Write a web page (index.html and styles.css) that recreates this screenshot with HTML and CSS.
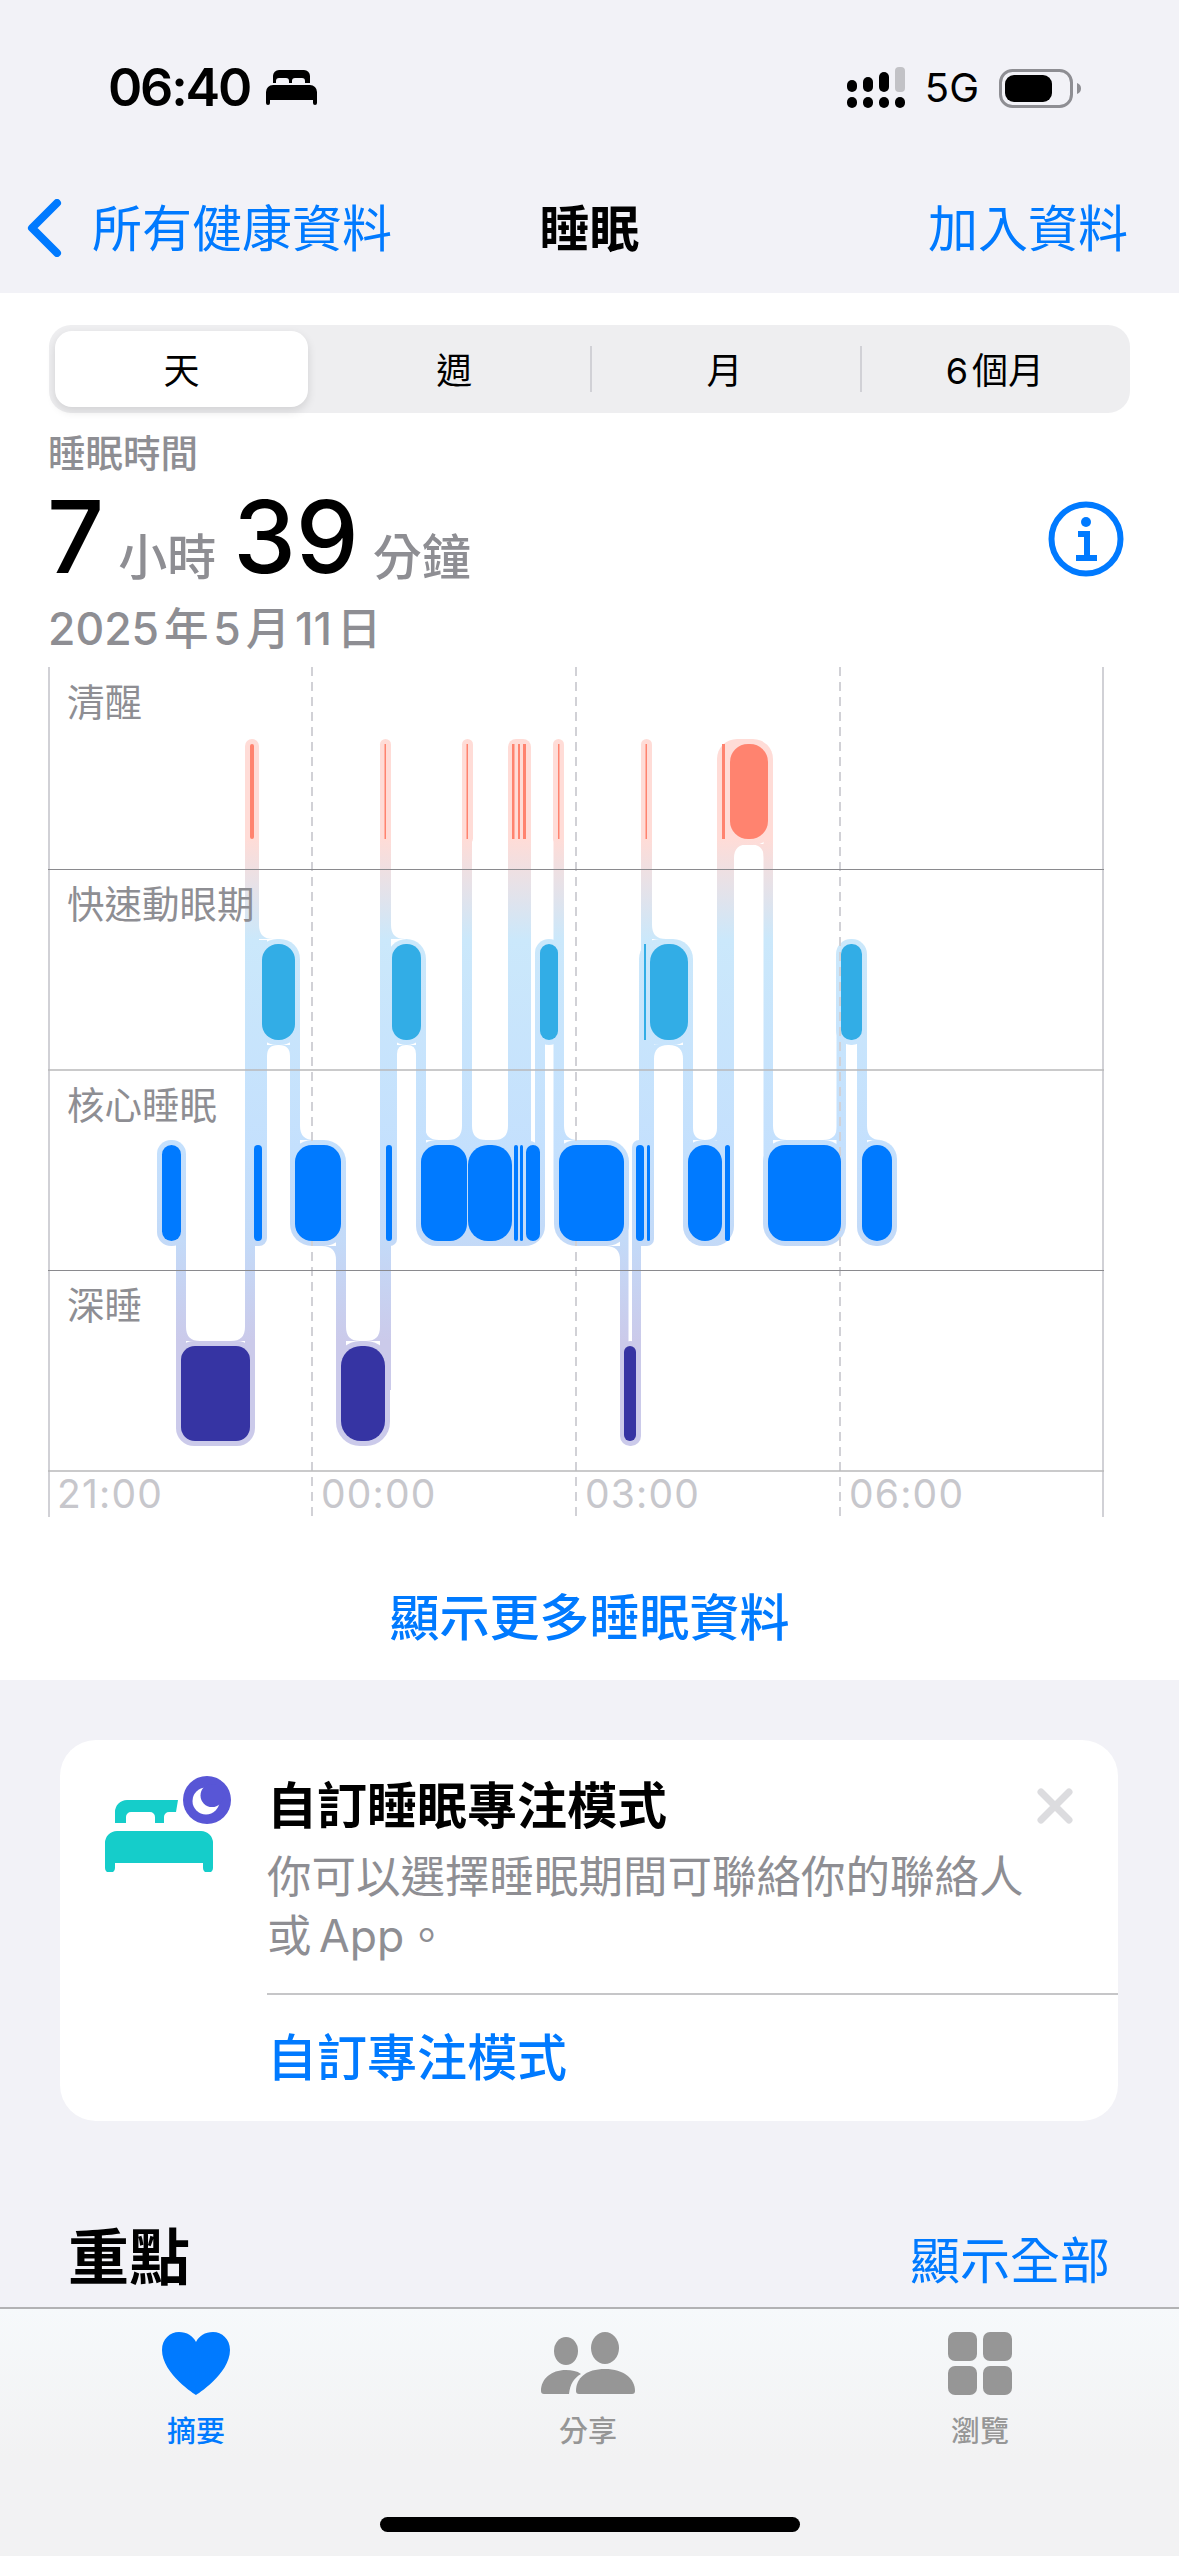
FILE: index.html
```html
<!DOCTYPE html>
<html lang="zh-Hant">
<head>
  <meta charset="utf-8">
  <title>睡眠</title>
  <link rel="stylesheet" href="styles.css">
</head>
<body>
<div class="screen">

  <header class="top">
    <div class="status">
      <div class="status-left">
        <span class="clock">06:40</span>
        <svg class="status-bed" viewBox="0 0 51 35">
          <path d="M7 13V6a6 6 0 0 1 6-6h25a6 6 0 0 1 6 6v7h-5v-2a3 3 0 0 0-3-3h-7a3 3 0 0 0-3 3v2h-3v-2a3 3 0 0 0-3-3h-7a3 3 0 0 0-3 3v2z"/>
          <path d="M0 22a7 7 0 0 1 7-7h37a7 7 0 0 1 7 7v11a2 2 0 0 1-4 0v-3H4v3a2 2 0 0 1-4 0z"/>
        </svg>
      </div>
      <div class="status-right">
        <svg class="signal" viewBox="0 0 58 41">
          <rect x="0" y="13" width="10" height="12" rx="5"/>
          <rect x="16" y="10" width="10" height="15" rx="5"/>
          <rect x="32" y="5" width="10" height="20" rx="5"/>
          <rect class="signal-off" x="48" y="0" width="10" height="25" rx="4"/>
          <rect x="0" y="30" width="10" height="11" rx="5"/>
          <rect x="16" y="30" width="10" height="11" rx="5"/>
          <rect x="32" y="30" width="10" height="11" rx="5"/>
          <rect x="48" y="30" width="10" height="11" rx="5"/>
        </svg>
        <span class="net">5G</span>
        <svg class="battery" viewBox="0 0 82 39">
          <rect class="battery-case" x="1.5" y="1.5" width="71" height="36" rx="12"/>
          <rect x="6" y="6" width="47" height="27" rx="9"/>
          <path class="battery-cap" d="M78 14c3 1 4 3 4 5.500s-1 4.500-4 5.500z"/>
        </svg>
      </div>
    </div>
    <nav class="navbar">
      <a class="nav-back">
        <svg class="chevron" viewBox="0 0 36 58"><path d="M30 4 5 29l25 25"/></svg>
        <span>所有健康資料</span>
      </a>
      <strong class="nav-title">睡眠</strong>
      <a class="nav-add">加入資料</a>
    </nav>
  </header>

  <section class="sleep">
    <div class="segments">
      <div class="seg seg-on">天</div>
      <div class="seg">週</div>
      <div class="seg seg-line">月</div>
      <div class="seg seg-line">6 個月</div>
    </div>

    <div class="summary">
      <div class="sum-label">睡眠時間</div>
      <div class="sum-row">
        <div class="sum-value">
          <span class="num">7</span><span class="unit">小時</span><span class="num num-min">39</span><span class="unit">分鐘</span>
        </div>
        <svg class="info" viewBox="0 0 76 76">
          <circle cx="38" cy="38" r="34.500"/>
          <circle class="info-dot" cx="38" cy="21" r="5"/>
          <path d="M30 33h9v24M28 57h21"/>
        </svg>
      </div>
      <div class="sum-date">2025 年 5 月 11 日</div>
    </div>

    <div class="chart">
      <svg class="plot" viewBox="48 667 1056 850">
        <defs>
          <linearGradient id="halo" gradientUnits="userSpaceOnUse" x1="0" y1="739" x2="0" y2="1446">
            <stop offset="0.141" stop-color="#ffdcd7"/>
            <stop offset="0.284" stop-color="#cbe8fb"/>
            <stop offset="0.581" stop-color="#c4e0fd"/>
            <stop offset="0.709" stop-color="#c3daf8"/>
            <stop offset="0.851" stop-color="#cbcaea"/>
          </linearGradient>
        </defs>

        <g fill="url(#halo)">
          <!-- awake halos -->
          <rect x="245" y="739" width="14" height="105" rx="7"/>
          <rect x="380" y="739" width="11" height="105" rx="5.500"/>
          <rect x="462" y="739" width="11" height="105" rx="5.500"/>
          <rect x="508" y="739" width="23" height="105" rx="8"/>
          <rect x="553" y="739" width="11" height="105" rx="5.500"/>
          <rect x="641" y="739" width="11" height="105" rx="5.500"/>
          <rect x="717" y="739" width="56" height="106" rx="20"/>
          <!-- rem halos -->
          <rect x="257" y="939" width="43" height="106" rx="20"/>
          <rect x="387" y="939" width="39" height="106" rx="20"/>
          <rect x="535" y="939" width="28" height="106" rx="14"/>
          <rect x="639" y="939" width="54" height="106" rx="20"/>
          <rect x="836" y="939" width="31" height="106" rx="15"/>
          <!-- core halos -->
          <rect x="157" y="1140" width="29" height="106" rx="14"/>
          <rect x="245" y="1140" width="22" height="106" rx="8"/>
          <rect x="290" y="1140" width="56" height="106" rx="22"/>
          <rect x="380" y="1140" width="17" height="106" rx="7"/>
          <rect x="416" y="1140" width="129" height="106" rx="20"/>
          <rect x="554" y="1140" width="75" height="106" rx="22"/>
          <rect x="632" y="1140" width="22" height="106" rx="7"/>
          <rect x="683" y="1140" width="51" height="106" rx="20"/>
          <rect x="763" y="1140" width="83" height="106" rx="22"/>
          <rect x="857" y="1140" width="40" height="106" rx="19"/>
          <!-- deep halos -->
          <rect x="176" y="1341" width="79" height="105" rx="18"/>
          <rect x="336" y="1341" width="54" height="105" rx="24"/>
          <rect x="620" y="1341" width="21" height="105" rx="10"/>
          <!-- links between stages -->
          <path d="M245 790h14v150h-14zM245 940h22v260h-22zM290 1000h10v190h-10zM176 1200h10v190h-10zM245 1200h10v190h-10zM336 1200h10v190h-10zM380 790h11v600h-11zM380 1000h17v190h-17zM416 1000h10v190h-10zM462 790h10v400h-10zM508 790h23v400h-23zM535 1000h10v190h-10zM553.500 790h10.500v400h-10.500zM620 1200h8.500v190h-8.500zM632 1200h9v190h-9zM641 790h11v200h-11zM639 1000h15v190h-15zM683 1000h10v190h-10zM717 790h17v400h-17zM763.500 790h9.500v400h-9.500zM836.500 1000h9.500v190h-9.500zM857 1000h10v190h-10z"/>
          <!-- rounded inner corners -->
          <path d="M734 844h15q-15 0-15 14zM764 844h-15q15 0 15 14zM259 939h14q-14 0-14-14zM391 939h14q-14 0-14-14zM652 939h14q-14 0-14-14zM267 1045h11q-11 0-11 11zM290 1045h-11q11 0 11 11zM397 1045h9q-9 0-9 9zM416 1045h-9q9 0 9 9zM654 1045h14q-14 0-14 14zM683 1045h-14q14 0 14 14zM425 1140h14q-14 0-14-14zM462 1140h-14q14 0 14-14zM472 1140h14q-14 0-14-14zM508 1140h-14q14 0 14-14zM564 1140h14q-14 0-14-14zM300 1140h14q-14 0-14-14zM693 1140h12q-12 0-12-12zM717 1140h-12q12 0 12-12zM773 1140h14q-14 0-14-14zM837 1140h-14q14 0 14-14zM867 1140h14q-14 0-14-14zM186 1341h14q-14 0-14-14zM245 1341h-14q14 0 14-14zM346 1341h14q-14 0-14-14zM380 1341h-14q14 0 14-14zM336 1246h-14q14 0 14 14zM620 1246h-14q14 0 14 14z"/>
        </g>

        <!-- grid -->
        <g class="grid-axis">
          <path d="M49 667v850M1103 667v850"/>
        </g>
        <g class="grid-dash">
          <path d="M312 667v850M576 667v850M840 667v850"/>
        </g>
        <path class="grid-dark" d="M48 869.500h1056M48 1270.500h1056"/>
        <path class="grid-soft" d="M48 1070h1056M48 1471h1056"/>

        <g class="bar-awake">
          <rect x="250" y="744" width="4" height="95" rx="2"/>
          <rect x="384.500" y="744" width="1.500" height="95"/>
          <rect x="466.500" y="744" width="1.500" height="95"/>
          <rect x="512" y="744" width="2.500" height="95"/>
          <rect x="518" y="744" width="2" height="95"/>
          <rect x="523" y="744" width="3" height="95"/>
          <rect x="558" y="744" width="1.500" height="95"/>
          <rect x="645.500" y="744" width="1.500" height="95"/>
          <rect x="722" y="744" width="3" height="95"/>
          <rect x="730" y="744" width="38" height="95" rx="18"/>
        </g>
        <g class="bar-rem">
          <rect x="262" y="944" width="33" height="96" rx="16"/>
          <rect x="392" y="944" width="29" height="96" rx="14"/>
          <rect x="540" y="944" width="18" height="96" rx="9"/>
          <rect x="644" y="944" width="2" height="96"/>
          <rect x="650" y="944" width="38" height="96" rx="18"/>
          <rect x="841" y="944" width="21" height="96" rx="10"/>
        </g>
        <g class="bar-core">
          <rect x="162" y="1145" width="19" height="96" rx="9.500"/>
          <rect x="254" y="1145" width="8" height="96" rx="4"/>
          <rect x="295" y="1145" width="46" height="96" rx="17"/>
          <rect x="386" y="1145" width="6" height="96" rx="3"/>
          <rect x="421" y="1145" width="46" height="96" rx="17"/>
          <rect x="468" y="1145" width="44" height="96" rx="20"/>
          <rect x="514" y="1145" width="4" height="96" rx="2"/>
          <rect x="520" y="1145" width="3" height="96" rx="1.500"/>
          <rect x="526" y="1145" width="14" height="96" rx="7"/>
          <rect x="559" y="1145" width="65" height="96" rx="17"/>
          <rect x="636" y="1145" width="8" height="96" rx="4"/>
          <rect x="647" y="1145" width="3" height="96" rx="1.500"/>
          <rect x="688" y="1145" width="34" height="96" rx="17"/>
          <rect x="725" y="1145" width="5" height="96" rx="2.500"/>
          <rect x="768" y="1145" width="73" height="96" rx="17"/>
          <rect x="862" y="1145" width="30" height="96" rx="15"/>
        </g>
        <g class="bar-deep">
          <rect x="181" y="1346" width="69" height="95" rx="14"/>
          <rect x="341" y="1346" width="44" height="95" rx="20"/>
          <rect x="624" y="1346" width="12" height="95" rx="6"/>
        </g>
      </svg>

      <div class="stage">清醒</div>
      <div class="stage">快速動眼期</div>
      <div class="stage">核心睡眠</div>
      <div class="stage">深睡</div>
      <div class="hours">
        <span>21:00</span>
        <span>00:00</span>
        <span>03:00</span>
        <span>06:00</span>
      </div>
    </div>

    <a class="more">顯示更多睡眠資料</a>
  </section>

  <section class="card">
    <svg class="card-icon" viewBox="0 0 126 96">
      <path class="bed" d="M0 67a12 12 0 0 1 12-12h84a12 12 0 0 1 12 12v25a5 5 0 0 1-10 0v-5H10v5a5 5 0 0 1-10 0z"/>
      <path class="bed" d="M10 47V36a12 12 0 0 1 12-12h51l-2 12h-7a5 5 0 0 0-5 5v6h-9v-6a5 5 0 0 0-5-5H26a5 5 0 0 0-5 5v6z"/>
      <circle class="moon" cx="102" cy="24" r="24"/>
      <circle class="moon-light" cx="101" cy="25" r="13.500"/>
      <circle class="moon" cx="107" cy="19.500" r="11.500"/>
    </svg>
    <div class="card-body">
      <div class="card-head">
        <h2>自訂睡眠專注模式</h2>
        <svg class="close" viewBox="0 0 36 36"><path d="M4 4l28 28M32 4 4 32"/></svg>
      </div>
      <p>你可以選擇睡眠期間可聯絡你的聯絡人<br>或 App。</p>
      <a class="card-link">自訂專注模式</a>
    </div>
  </section>

  <div class="highlights">
    <h2>重點</h2>
    <a>顯示全部</a>
  </div>

  <footer class="tabbar">
    <div class="tab tab-on">
      <svg class="tab-heart" viewBox="0 0 68 63"><path d="M34 63S0 42 0 18C0 7 8 0 17 0c8 0 14 4 17 10C37 4 43 0 51 0c9 0 17 7 17 18 0 24-34 45-34 45z"/></svg>
      <span>摘要</span>
    </div>
    <div class="tab">
      <svg class="tab-share" viewBox="0 0 94 63">
        <ellipse cx="25" cy="19" rx="12" ry="14"/>
        <ellipse cx="64" cy="16" rx="14" ry="16"/>
        <path d="M3 62a3 3 0 0 1-3-3C0 47 10 38 25 38c6 0 11 1 15 4C33 46 29 52 28 62z"/>
        <path d="M38 62a3 3 0 0 1-3-3C35 46 45 37 64 37s30 10 30 22a3 3 0 0 1-3 3z"/>
      </svg>
      <span>分享</span>
    </div>
    <div class="tab">
      <svg class="tab-grid" viewBox="0 0 64 63">
        <rect x="0" y="0" width="29" height="29" rx="7"/>
        <rect x="35" y="0" width="29" height="29" rx="7"/>
        <rect x="0" y="34" width="29" height="29" rx="7"/>
        <rect x="35" y="34" width="29" height="29" rx="7"/>
      </svg>
      <span>瀏覽</span>
    </div>
    <div class="home-bar"></div>
  </footer>

</div>
</body>
</html>
```

FILE: styles.css
```css
* {
  box-sizing: border-box;
}

body {
  margin: 0;
  background: #f2f2f7;
  font-family: Inter, "Noto Sans CJK TC", sans-serif;
  color: #000;
}

h2, p {
  margin: 0;
}

.screen {
  width: 1179px;
  height: 2556px;
  overflow: hidden;
  display: flex;
  flex-direction: column;
}

/* status + nav */
.top {
  height: 293px;
  flex: none;
}

.status {
  height: 162px;
  padding: 58px 98px 0 108px;
  display: flex;
  justify-content: space-between;
  align-items: flex-start;
}

.status-left, .status-right {
  height: 60px;
  display: flex;
  align-items: center;
}

.clock {
  font-size: 52px;
  font-weight: 600;
  line-height: 60px;
  letter-spacing: -2.200px;
}

.status-bed {
  width: 51px;
  height: 35px;
  margin-left: 16px;
  margin-top: -1px;
}

.signal {
  width: 58px;
  height: 41px;
  margin-top: -1px;
}

.signal-off {
  fill: #c2c2c6;
}

.net {
  font-size: 40px;
  line-height: 60px;
  margin-left: 20px;
}

.battery {
  width: 82px;
  height: 39px;
  margin-left: 20px;
}

.battery-case {
  fill: none;
  stroke: #8e8e93;
  stroke-width: 3;
}

.battery-cap {
  fill: #8e8e93;
}

.navbar {
  height: 131px;
  padding: 0 51px 6px 27px;
  display: grid;
  grid-template-columns: 1fr auto 1fr;
  align-items: center;
  font-size: 50px;
  color: #007aff;
}

.nav-back {
  display: flex;
  align-items: center;
  gap: 29px;
}

.chevron {
  width: 36px;
  height: 58px;
  margin-top: 6px;
  fill: none;
  stroke: #007aff;
  stroke-width: 8;
  stroke-linecap: round;
  stroke-linejoin: round;
}

.nav-title {
  color: #000;
  font-weight: 700;
  margin-left: 24px;
}

.nav-add {
  text-align: right;
}

/* sleep panel */
.sleep {
  height: 1387px;
  flex: none;
  background: #fff;
  padding-top: 32px;
}

.segments {
  margin: 0 49px;
  height: 88px;
  border-radius: 22px;
  background: #eeeef0;
  display: grid;
  grid-template-columns: repeat(4, 1fr);
}

.seg {
  position: relative;
  display: flex;
  align-items: center;
  justify-content: center;
  padding-bottom: 2px;
  font-size: 36px;
  word-spacing: -6px;
}

.seg-on {
  margin: 6px 11px 6px 6px;
  background: #fff;
  border-radius: 17px;
  box-shadow: 0 4px 10px rgba(0, 0, 0, 0.12);
}

.seg-line::before {
  content: "";
  position: absolute;
  left: 0;
  top: 21px;
  bottom: 21px;
  width: 2px;
  background: #d1d1d6;
}

.summary {
  padding: 19px 55px 0 48px;
  color: #8e8e93;
  font-weight: 500;
}

.sum-label {
  font-size: 37.500px;
  line-height: 44px;
}

.sum-row {
  display: flex;
  justify-content: space-between;
  align-items: center;
  height: 112px;
  margin-top: 5px;
}

.sum-value {
  display: flex;
  align-items: baseline;
  margin-left: -1px;
}

.num {
  font-size: 100px;
  color: #000;
  line-height: 112px;
}

.unit {
  font-size: 49px;
  margin-left: 14px;
  position: relative;
  top: 2px;
}

.num-min {
  margin-left: 17px;
}

.info {
  width: 76px;
  height: 76px;
  margin-top: 4px;
  fill: none;
  stroke: #007aff;
  stroke-width: 6;
}

.info-dot {
  fill: #007aff;
  stroke: none;
}

.sum-date {
  margin-top: 11px;
  font-size: 44.500px;
  line-height: 50px;
  word-spacing: -7px;
}

/* chart */
.chart {
  position: relative;
  width: 1056px;
  height: 850px;
  margin: 13px 0 0 48px;
  display: grid;
  grid-template-rows: 202px 201px 200px 201px 46px;
}

.plot {
  position: absolute;
  left: 0;
  top: 0;
  width: 1056px;
  height: 850px;
}

.grid-axis path {
  fill: none;
  stroke: #d1d1d6;
  stroke-width: 2;
}

.grid-dash path {
  fill: none;
  stroke: #d1d1d6;
  stroke-width: 2;
  stroke-dasharray: 9 6;
}

.grid-dark {
  fill: none;
  stroke: #8a8a8e;
  stroke-width: 1;
}

.grid-soft {
  fill: none;
  stroke: #b9b9bb;
  stroke-width: 1.500;
}

.bar-awake { fill: #ff836f; }
.bar-rem { fill: #32ade6; }
.bar-core { fill: #007aff; }
.bar-deep { fill: #3634a3; }

.stage {
  position: relative;
  padding: 16px 0 0 19px;
  font-size: 37.500px;
  line-height: 40px;
  color: #8e8e93;
}

.hours {
  position: relative;
  display: grid;
  grid-template-columns: repeat(4, 264px);
  font-size: 39px;
  line-height: 46px;
  letter-spacing: 1.200px;
  color: #c7c7cc;
}

.hours span {
  padding-left: 9px;
}

.more {
  display: block;
  margin-top: 66px;
  text-align: center;
  font-size: 50px;
  font-weight: 500;
  line-height: 70px;
  color: #007aff;
}

/* card */
.card {
  flex: none;
  height: 381px;
  margin: 60px 61px 0 60px;
  padding: 36px 0 0 45px;
  border-radius: 36px;
  background: #fff;
  display: flex;
}

.card-icon {
  width: 126px;
  height: 96px;
  flex: none;
}

.bed { fill: #15cdca; }
.moon { fill: #5856d6; }
.moon-light { fill: #fff; }

.card-body {
  flex: 1;
  margin: -4px 0 0 36px;
}

.card-head {
  display: flex;
  justify-content: space-between;
  align-items: center;
  padding-right: 45px;
  height: 68px;
}

.card-head h2 {
  font-size: 50px;
  font-weight: 600;
  line-height: 68px;
}

.close {
  width: 36px;
  height: 36px;
  fill: none;
  stroke: #dcdcdf;
  stroke-width: 7;
  stroke-linecap: round;
}

.card-body p {
  margin-top: 8px;
  font-size: 44.500px;
  line-height: 59px;
  word-spacing: -5px;
  color: #8e8e93;
}

.card-link {
  display: block;
  margin-top: 27px;
  padding-top: 28px;
  border-top: 2px solid #c6c6c8;
  font-size: 50px;
  font-weight: 500;
  line-height: 70px;
  color: #007aff;
}

/* highlights */
.highlights {
  flex: none;
  height: 186px;
  padding: 102px 68px 0 68px;
  display: flex;
  justify-content: space-between;
  align-items: flex-start;
}

.highlights h2 {
  font-size: 61px;
  font-weight: 700;
  line-height: 70px;
}

.highlights a {
  font-size: 50px;
  line-height: 70px;
  margin: 3px 1px 0 0;
  color: #007aff;
}

/* tabs */
.tabbar {
  position: relative;
  flex: 1;
  padding-right: 3px;
  border-top: 2px solid #b2b2b4;
  background: linear-gradient(#f6f9fb, #f2f2f3 60%);
  display: grid;
  grid-template-columns: repeat(3, 1fr);
  align-items: start;
}

.tab {
  padding-top: 23px;
  display: flex;
  flex-direction: column;
  align-items: center;
  font-size: 29px;
  font-weight: 500;
  line-height: 36px;
  color: #969696;
}

.tab svg {
  height: 63px;
  fill: #969696;
  margin-bottom: 19px;
}

.tab-on {
  color: #007aff;
}

.tab .tab-heart {
  width: 68px;
  fill: #007aff;
}

.tab-share {
  width: 94px;
}

.tab-grid {
  width: 64px;
}

.home-bar {
  position: absolute;
  left: 380px;
  top: 208px;
  width: 420px;
  height: 15px;
  border-radius: 8px;
  background: #000;
}
```
